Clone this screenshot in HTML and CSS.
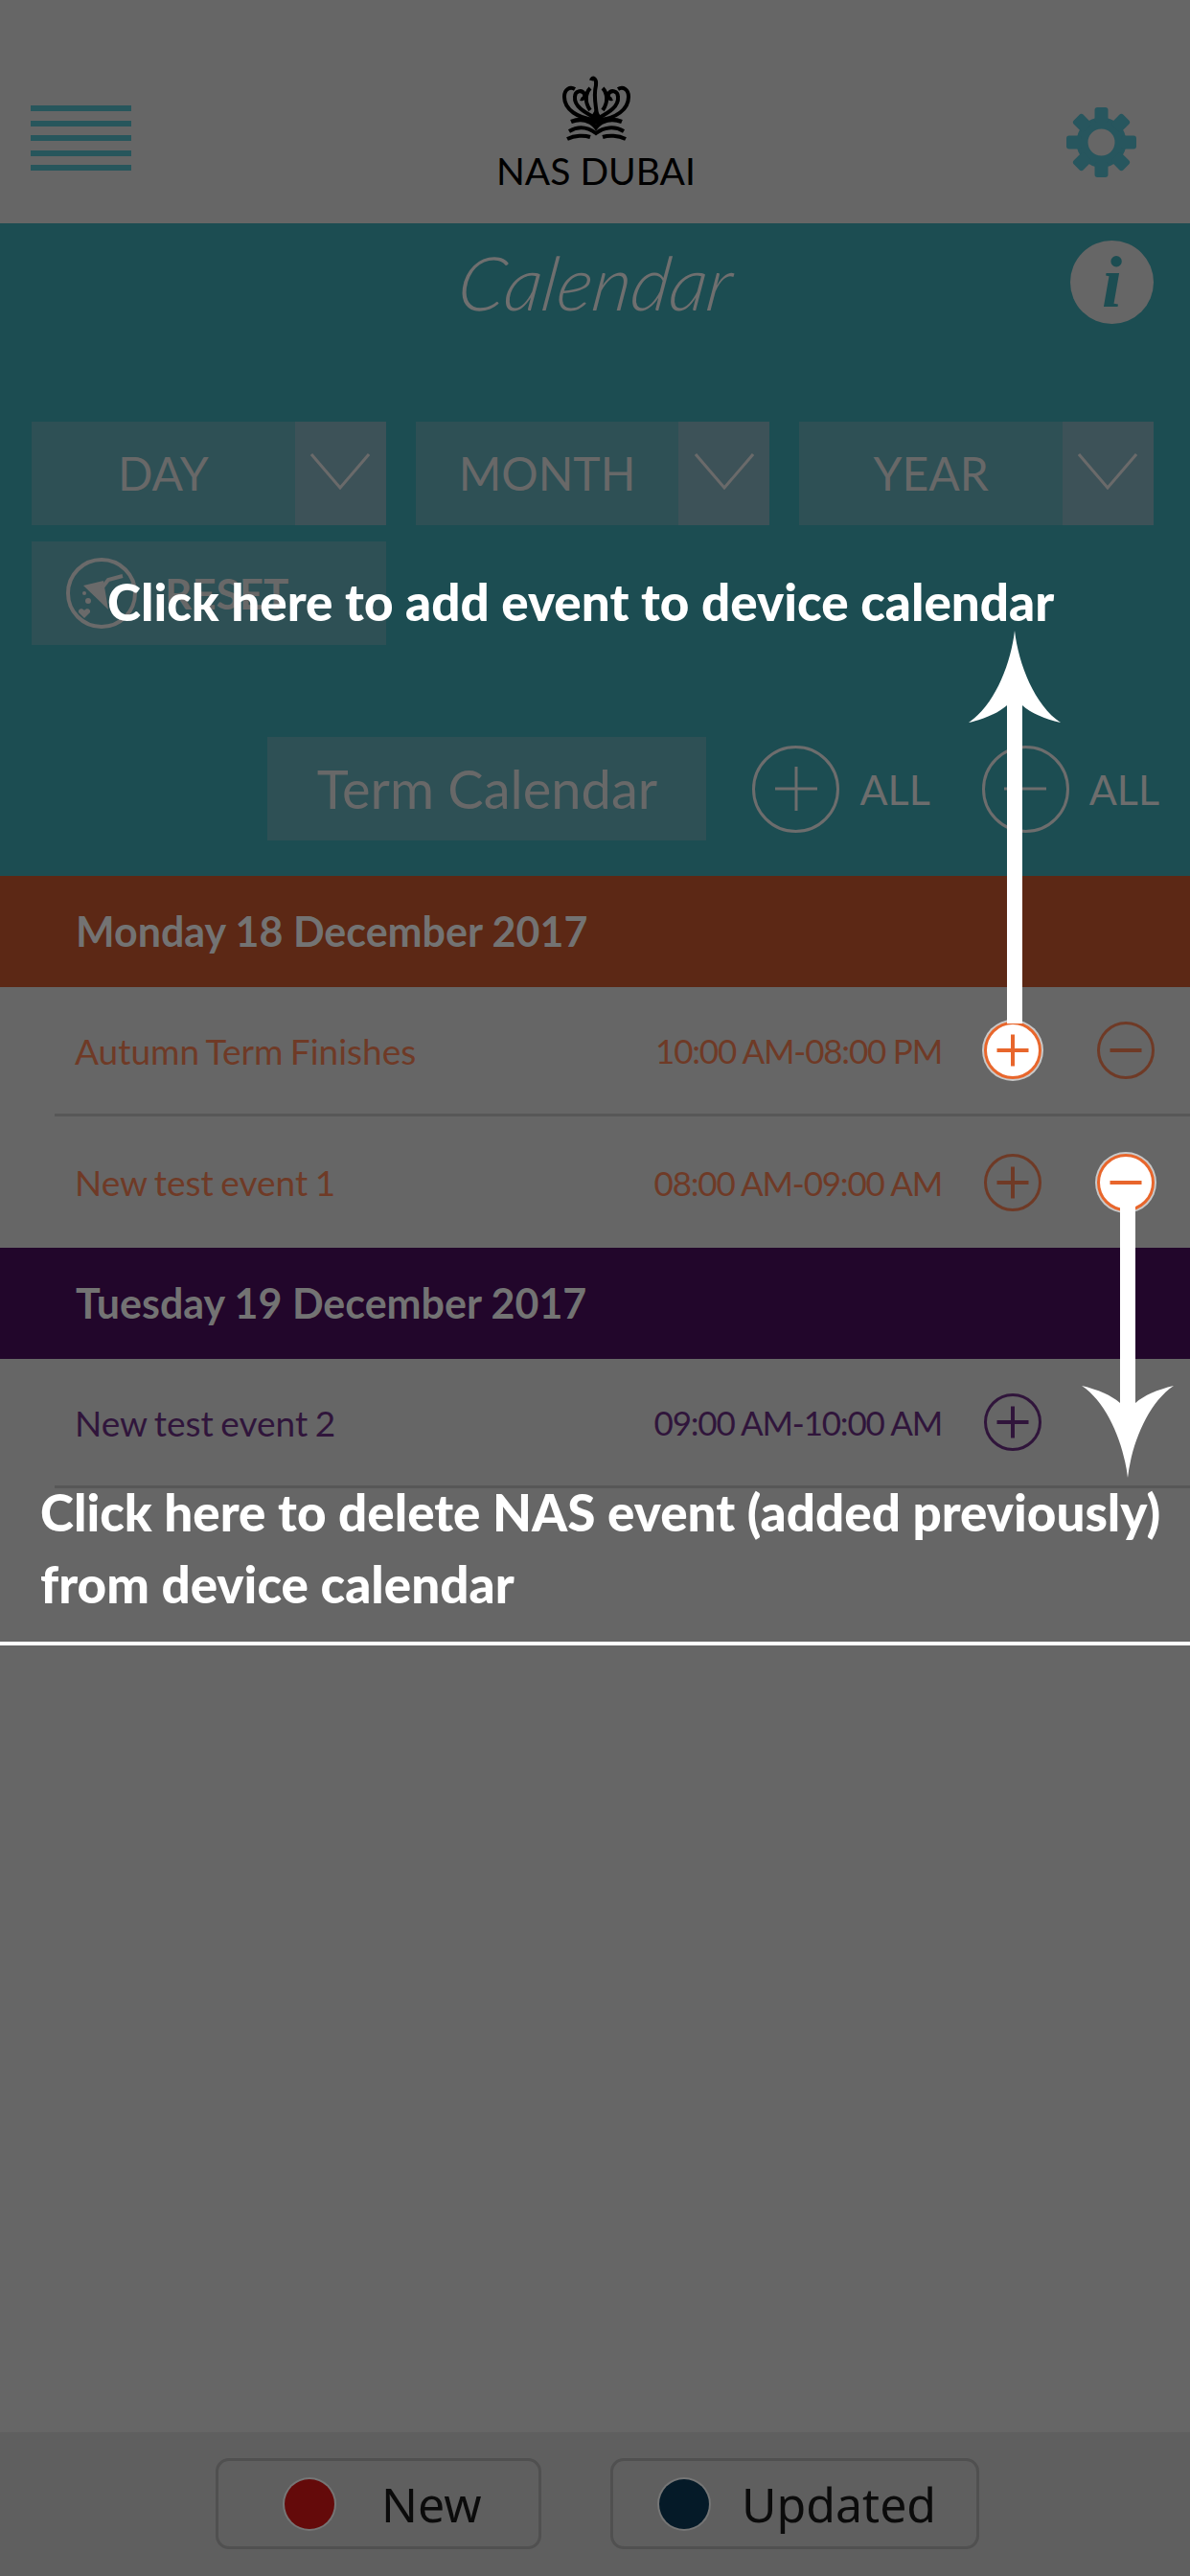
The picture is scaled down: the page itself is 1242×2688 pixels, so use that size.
FILE: index.html
```html
<!DOCTYPE html>
<html lang="en">
<head>
    <meta charset="UTF-8">
    <meta name="viewport" content="width=device-width, initial-scale=1.0">
    <title>Calendar</title>
    <link rel="stylesheet" href="styles.css">
</head>
<body>
    <div class="app">
        <header class="topbar">
            <div class="hamburger"><span></span><span></span><span></span><span></span><span></span></div>
            <div class="logo">
                <svg class="crown" viewBox="0 0 73 70" fill="none" stroke="#000" stroke-width="4">
                    <path d="M37 44C36 32 33 24 36 12C37 5 32 2 31 7"/>
                    <path d="M35 46C24 40 13 34 14 24C14 18 21 16 24 21C25 25 22 27 20 26"/>
                    <path d="M39 46C50 40 60 34 59 24C59 18 52 16 49 21C48 25 51 27 53 26"/>
                    <path d="M33 48C18 46 3 38 3 24C3 16 9 13 14 16"/>
                    <path d="M41 48C56 46 70 38 70 24C70 16 64 13 59 16"/>
                    <path d="M30 38C24 30 25 20 30 15"/>
                    <path d="M43 38C49 30 48 20 43 15"/>
                    <path d="M10 50C20 46 30 48 36 56C42 48 53 46 63 50" stroke-width="4.5"/>
                    <path d="M8 60C18 54 28 56 36 62C44 56 55 54 65 60"/>
                    <path d="M6 68C14 64 24 64 30 66M67 68C59 64 49 64 43 66"/>
                    <path d="M36 40L30 50L42 50Z" fill="#000"/>
                </svg>
                <div class="logo-text">NAS DUBAI</div>
            </div>
            <svg class="gear" viewBox="0 0 73 73" fill="#27565e">
                <circle cx="36.5" cy="36.5" r="20" fill="none" stroke="#27565e" stroke-width="12"/>
                <rect x="29.5" y="0" width="14" height="16" rx="3"/>
                <rect x="29.5" y="0" width="14" height="16" rx="3" transform="rotate(45 36.5 36.5)"/>
                <rect x="29.5" y="0" width="14" height="16" rx="3" transform="rotate(90 36.5 36.5)"/>
                <rect x="29.5" y="0" width="14" height="16" rx="3" transform="rotate(135 36.5 36.5)"/>
                <rect x="29.5" y="0" width="14" height="16" rx="3" transform="rotate(180 36.5 36.5)"/>
                <rect x="29.5" y="0" width="14" height="16" rx="3" transform="rotate(225 36.5 36.5)"/>
                <rect x="29.5" y="0" width="14" height="16" rx="3" transform="rotate(270 36.5 36.5)"/>
                <rect x="29.5" y="0" width="14" height="16" rx="3" transform="rotate(315 36.5 36.5)"/>
            </svg>
        </header>

        <section class="filters">
            <div class="title-row">
                <h1 class="title">Calendar</h1>
                <div class="info">i</div>
            </div>
            <div class="selects">
                <div class="select"><span class="select-label">DAY</span><span class="select-arrow"><svg viewBox="0 0 62 38"><path d="M1 1L31 36L61 1"/></svg></span></div>
                <div class="select"><span class="select-label">MONTH</span><span class="select-arrow"><svg viewBox="0 0 62 38"><path d="M1 1L31 36L61 1"/></svg></span></div>
                <div class="select"><span class="select-label">YEAR</span><span class="select-arrow"><svg viewBox="0 0 62 38"><path d="M1 1L31 36L61 1"/></svg></span></div>
                <div class="reset">
                    <svg class="reset-icon" viewBox="0 0 76 76" fill="#6a6a6a">
                        <circle cx="38" cy="38" r="35" fill="none" stroke="#6a6a6a" stroke-width="4"/>
                        <path d="M19 30L40 25L45 55Z"/>
                        <path d="M38 33L45 24L60 20" fill="none" stroke="#6a6a6a" stroke-width="4"/>
                        <circle cx="20" cy="38" r="2"/>
                        <circle cx="24" cy="46" r="3"/>
                        <path d="M20 64L14 58C13 54 18 53 20 56C22 53 27 54 26 58Z"/>
                    </svg>
                    <span class="reset-label">RESET</span>
                </div>
            </div>
            <div class="term-row">
                <div class="term-btn">Term Calendar</div>
                <div class="all-btn"><span class="circle big plus"></span><span>ALL</span></div>
                <div class="all-btn"><span class="circle big minus"></span><span>ALL</span></div>
            </div>
        </section>

        <main class="events">
            <h2 class="day day-brown">Monday 18 December 2017</h2>
            <div class="event brown">
                <span class="event-name">Autumn Term Finishes</span>
                <span class="event-time">10:00 AM-08:00 PM</span>
                <span class="circle plus active"></span>
                <span class="circle minus"></span>
            </div>
            <div class="event brown no-line">
                <span class="event-name">New test event 1</span>
                <span class="event-time">08:00 AM-09:00 AM</span>
                <span class="circle plus"></span>
                <span class="circle minus active"></span>
            </div>
            <h2 class="day day-purple">Tuesday 19 December 2017</h2>
            <div class="event purple">
                <span class="event-name">New test event 2</span>
                <span class="event-time">09:00 AM-10:00 AM</span>
                <span class="circle plus"></span>
                <span class="circle empty"></span>
            </div>
        </main>

        <footer class="legend">
            <div class="legend-item new"><span class="dot dot-red"></span><span>New</span></div>
            <div class="legend-item updated"><span class="dot dot-navy"></span><span>Updated</span></div>
        </footer>
    </div>

    <!-- help overlay -->
    <div class="hint hint-add">Click here to add event to device calendar</div>
    <div class="hint hint-delete">Click here to delete NAS event (added previously) from device calendar</div>
    <svg class="arrow arrow-up" viewBox="0 0 98 410"><path d="M49 0C53 35 70 78 97 96C80 92 66 86 57 78V410H41V78C32 86 18 92 1 96C28 78 45 35 49 0Z"/></svg>
    <svg class="arrow arrow-down" viewBox="0 0 98 284"><path d="M49 284C45 249 28 206 1 188C18 192 32 198 41 206V0H57V206C66 198 80 192 97 188C70 206 53 249 49 284Z"/></svg>
</body>
</html>
```

FILE: styles.css
```css
* {
    box-sizing: border-box;
}
body {
    margin: 0;
    background: #666;
    font-family: "Lato", "Liberation Sans", sans-serif;
    color: #686868;
    position: relative;
}
.app {
    width: 1242px;
    height: 2688px;
    overflow: hidden;
    display: flex;
    flex-direction: column;
}

/* top bar */
.topbar {
    height: 233px;
    flex-shrink: 0;
    display: flex;
    justify-content: space-between;
    align-items: flex-start;
    padding: 77px 56px 0 32px;
}
.hamburger {
    width: 105px;
    margin-top: 33px;
    display: flex;
    flex-direction: column;
    gap: 9.5px;
}
.hamburger span {
    height: 6px;
    background: #27565c;
}
.logo {
    display: flex;
    flex-direction: column;
    align-items: center;
    margin-left: -6px;
}
.crown {
    width: 73px;
    height: 70px;
}
.logo-text {
    font-size: 39px;
    line-height: 48px;
    color: #000;
    margin-top: 7px;
}
.gear {
    width: 73px;
    height: 73px;
    margin-top: 35px;
}

/* teal filter block */
.filters {
    height: 681px;
    flex-shrink: 0;
    background: #1c4d52;
    padding: 0 38px 0 33px;
}
.title-row {
    height: 207px;
    display: flex;
    justify-content: center;
    position: relative;
}
.title {
    margin: 16px 8px 0 0;
    font-style: italic;
    font-weight: 300;
    font-size: 78px;
    line-height: 90px;
    color: #6f6f6f;
    transform: skewX(-8deg);
}
.info {
    position: absolute;
    right: 0;
    top: 18px;
    width: 87px;
    height: 87px;
    border-radius: 50%;
    background: #666;
    color: #1c4d52;
    font-family: "Liberation Serif", serif;
    font-style: italic;
    font-weight: bold;
    font-size: 76px;
    line-height: 87px;
    text-align: center;
}
.selects {
    display: grid;
    grid-template-columns: repeat(3, 1fr);
    column-gap: 31px;
    row-gap: 17px;
}
.select {
    height: 108px;
    display: flex;
    background: #2e5055;
}
.select-label {
    flex: 1;
    font-size: 48px;
    line-height: 108px;
    text-align: center;
}
.select-arrow {
    width: 95px;
    background: #3d5258;
    display: flex;
    align-items: center;
    justify-content: center;
}
.select-arrow svg {
    width: 62px;
    height: 38px;
    fill: none;
    stroke: #6a6a6a;
    stroke-width: 3;
    margin-bottom: 4px;
}
.reset {
    height: 108px;
    background: #2e5055;
    display: flex;
    align-items: center;
    gap: 28px;
    padding-left: 35px;
}
.reset-icon {
    width: 76px;
    height: 76px;
}
.reset-label {
    font-size: 44px;
    font-weight: bold;
}
.term-row {
    margin-top: 96px;
    display: flex;
    justify-content: flex-end;
    align-items: center;
    margin-right: -6px;
}
.term-btn {
    width: 458px;
    height: 108px;
    background: #2e5055;
    font-size: 56px;
    line-height: 108px;
    text-align: center;
    margin-right: 48px;
}
.all-btn {
    display: flex;
    align-items: center;
    gap: 21px;
    font-size: 43px;
    color: #6d6d6d;
}
.all-btn + .all-btn {
    margin-left: 54px;
}

/* plus and minus buttons */
.circle {
    width: 60px;
    height: 60px;
    border-radius: 50%;
    border: 3px solid currentColor;
    position: relative;
    flex-shrink: 0;
}
.circle.big {
    width: 91px;
    height: 91px;
}
.circle.empty {
    border: none;
}
.plus::before,
.minus::before,
.plus::after {
    content: "";
    position: absolute;
    background: currentColor;
    left: 50%;
    top: 50%;
    width: 33px;
    height: 4px;
    transform: translate(-50%, -50%);
}
.plus::after {
    width: 4px;
    height: 33px;
}
.big.plus::before,
.big.minus::before {
    width: 44px;
    height: 3px;
}
.big.plus::after {
    width: 3px;
    height: 46px;
}
.circle.active {
    background: #fff;
    color: #e8662c;
    box-shadow: 0 0 0 2px #c9c9c9;
}

/* event list */
.events {
    height: 803px;
    flex-shrink: 0;
    border-bottom: 4px solid #fff;
}
.day {
    margin: 0;
    height: 116px;
    padding-left: 79px;
    font-size: 43px;
    font-weight: bold;
    line-height: 116px;
    color: #737373;
}
.day-brown {
    background: #5c2815;
}
.day-purple {
    background: #22062b;
}
.event {
    height: 135px;
    display: flex;
    align-items: center;
    gap: 58px;
    margin-left: 57px;
    padding: 0 37px 0 21px;
    border-bottom: 3px solid #575757;
    font-size: 37px;
}
.event.no-line {
    border-bottom: none;
    height: 137px;
}
.brown {
    color: #6f3a26;
}
.purple {
    color: #30153b;
}
.event-name {
    flex: 1;
    word-spacing: -2px;
}
.event-time {
    margin-right: -14px;
    font-size: 35px;
    letter-spacing: -1.2px;
}

/* bottom legend */
.legend {
    margin-top: auto;
    height: 150px;
    background: #5f5f5f;
    display: flex;
    justify-content: center;
    gap: 72px;
    padding: 27px 0 0 5px;
    font-family: "Noto Sans", sans-serif;
    font-size: 50px;
    color: #0b0b0b;
}
.legend-item {
    height: 95px;
    display: flex;
    align-items: center;
    border: 3px solid #505050;
    border-radius: 14px;
}
.legend-item.new {
    width: 340px;
    padding-left: 69px;
    gap: 49px;
}
.legend-item.updated {
    width: 385px;
    padding-left: 48px;
    gap: 34px;
}
.dot {
    width: 52px;
    height: 52px;
    border-radius: 50%;
    box-shadow: 0 0 0 2px #757575;
}
.dot-red {
    background: #640a0a;
}
.dot-navy {
    background: #051a28;
}

/* help overlay */
.hint {
    position: absolute;
    color: #fff;
    font-weight: 900;
    font-size: 53px;
    line-height: 75px;
}
.hint-add {
    left: 112px;
    top: 590px;
    white-space: nowrap;
}
.hint-delete {
    left: 42px;
    top: 1540px;
    width: 1180px;
}
.arrow {
    position: absolute;
    fill: #fff;
}
.arrow-up {
    left: 1010px;
    top: 658px;
    width: 98px;
    height: 410px;
}
.arrow-down {
    left: 1128px;
    top: 1258px;
    width: 98px;
    height: 284px;
}
```
